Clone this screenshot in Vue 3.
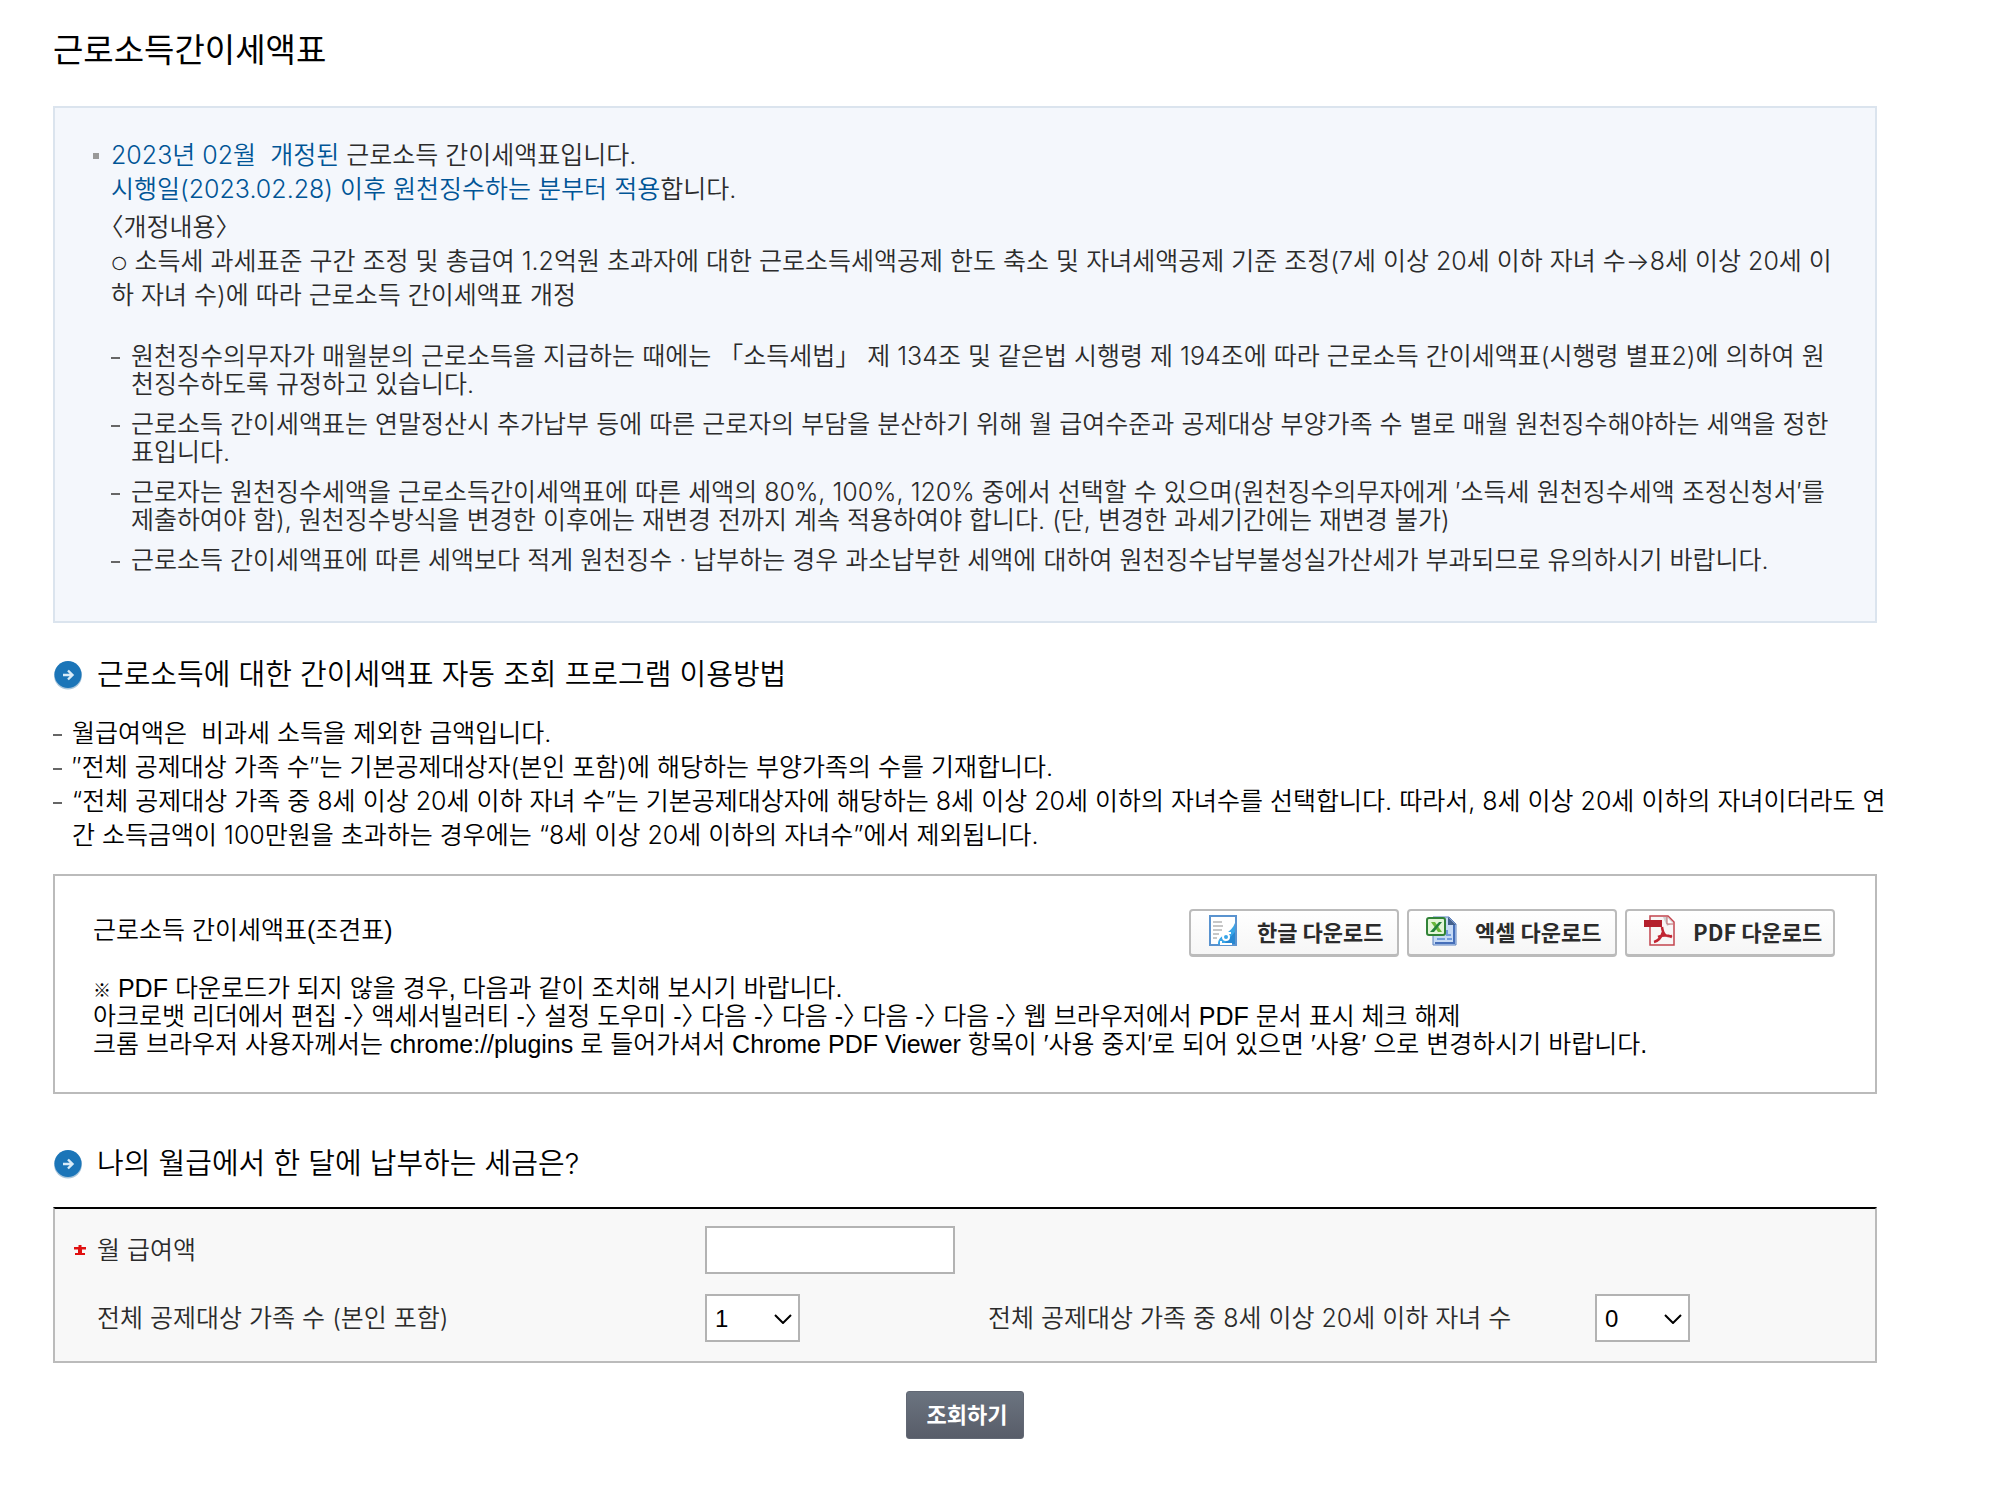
<script setup>
import { ref } from 'vue'

const salary = ref('')
const family = ref(1)
const children = ref(0)

const notices = [
  ['원천징수의무자가 매월분의 근로소득을 지급하는 때에는 「소득세법」 제 134조 및 같은법 시행령 제 194조에 따라 근로소득 간이세액표(시행령 별표2)에 의하여 원', '천징수하도록 규정하고 있습니다.'],
  ['근로소득 간이세액표는 연말정산시 추가납부 등에 따른 근로자의 부담을 분산하기 위해 월 급여수준과 공제대상 부양가족 수 별로 매월 원천징수해야하는 세액을 정한', '표입니다.'],
  ['근로자는 원천징수세액을 근로소득간이세액표에 따른 세액의 80%, 100%, 120% 중에서 선택할 수 있으며(원천징수의무자에게 ′소득세 원천징수세액 조정신청서′를', '제출하여야 함), 원천징수방식을 변경한 이후에는 재변경 전까지 계속 적용하여야 합니다. (단, 변경한 과세기간에는 재변경 불가)'],
  ['근로소득 간이세액표에 따른 세액보다 적게 원천징수 · 납부하는 경우 과소납부한 세액에 대하여 원천징수납부불성실가산세가 부과되므로 유의하시기 바랍니다.']
]

const guides = [
  ['월급여액은\u00a0 비과세 소득을 제외한 금액입니다.'],
  ['″전체 공제대상 가족 수″는 기본공제대상자(본인 포함)에 해당하는 부양가족의 수를 기재합니다.'],
  ['“전체 공제대상 가족 중 8세 이상 20세 이하 자녀 수”는 기본공제대상자에 해당하는 8세 이상 20세 이하의 자녀수를 선택합니다. 따라서, 8세 이상 20세 이하의 자녀이더라도 연', '간 소득금액이 100만원을 초과하는 경우에는 “8세 이상 20세 이하의 자녀수”에서 제외됩니다.']
]
</script>

<template>
  <main class="page">
    <h1 class="title">근로소득간이세액표</h1>

    <section class="notice">
      <div class="notice-intro">
        <p class="bullet"><em>2023년 02월&nbsp; 개정된</em> 근로소득 간이세액표입니다.</p>
        <p><em>시행일(2023.02.28) 이후 원천징수하는 분부터 적용</em>합니다.</p>
        <p class="revision">〈개정내용〉</p>
        <p><span class="mark">○</span> 소득세 과세표준 구간 조정 및 총급여 1.2억원 초과자에 대한 근로소득세액공제 한도 축소 및 자녀세액공제 기준 조정(7세 이상 20세 이하 자녀 수→8세 이상 20세 이</p>
        <p>하 자녀 수)에 따라 근로소득 간이세액표 개정</p>
      </div>
      <ul class="notice-list">
        <li v-for="(lines, i) in notices" :key="i">
          <span v-for="line in lines" :key="line" class="line">{{ line }}</span>
        </li>
      </ul>
    </section>

    <h2 class="heading">
      <svg class="heading-icon" viewBox="0 0 30 30" aria-hidden="true">
        <circle cx="15" cy="15.5" r="14" fill="#a9c6dc" />
        <circle cx="15" cy="14.5" r="13.5" fill="#1b75b8" />
        <path d="M10 15h9M15 10.500l4.500 4.500-4.500 4.500" fill="none" stroke="#d9ecf8" stroke-width="2.400" />
      </svg>
      근로소득에 대한 간이세액표 자동 조회 프로그램 이용방법
    </h2>
    <ul class="guide">
      <li v-for="(lines, i) in guides" :key="i">
        <span v-for="line in lines" :key="line" class="line">{{ line }}</span>
      </li>
    </ul>

    <section class="download">
      <div class="download-head">
        <h3>근로소득 간이세액표(조견표)</h3>
        <div class="download-buttons">
          <button type="button" class="btn-file">
            <svg viewBox="0 0 32 32" aria-hidden="true">
              <rect x="3" y="1" width="26" height="29" fill="#fff" stroke="#5a93cf" stroke-width="2" />
              <path d="M6 7h9M6 11h10M6 15h9M6 19h6M6 23h4" stroke="#b5b5b5" stroke-width="1.500" />
              <path d="M28 8v21H11c0-5 3-7 7-10 5-3 8-6 10-11z" fill="#39a5e8" />
              <path d="M28 17v12H17z" fill="#2788d2" />
              <g fill="none" stroke="#fff" stroke-width="2">
                <circle cx="19" cy="22" r="3" />
                <path d="M14 18h10M19 15v3M14 26v3h11" />
              </g>
            </svg>
            한글 다운로드
          </button>
          <button type="button" class="btn-file">
            <svg viewBox="0 0 32 32" aria-hidden="true">
              <path d="M8 2h16l7 7v21H8z" fill="#c6daf5" stroke="#5b80bf" />
              <path d="M29 10v18H10" fill="none" stroke="#466fb9" stroke-width="2" />
              <path d="M23 2l8 8h-8z" fill="#43618e" />
              <path d="M12 24h8M22 24h5M22 15v5h4M12 20h5" stroke="#729bdb" stroke-width="2" fill="none" />
              <rect x="2" y="3" width="18" height="17" rx="2" fill="#e3f5d8" stroke="#318337" stroke-width="2" />
              <path d="M6 7h4l7 10h-4z" fill="#6ab83b" />
              <path d="M14 7h3L9 17H5z" fill="#23823a" />
            </svg>
            엑셀 다운로드
          </button>
          <button type="button" class="btn-file">
            <svg viewBox="0 0 32 32" aria-hidden="true">
              <path d="M7 1h18l6 6v23H7z" fill="#f8f6f6" stroke="#c2444e" stroke-width="1.500" />
              <path d="M20 2h5l5 6-6 3z" fill="#cfcfcf" />
              <path d="M24 2v7h6" fill="#fff" stroke="#bc6268" />
              <path d="M1 5h18v7H1z" fill="#b41f2c" />
              <path d="M19 12c1 8 4 10 10 9M20 17c-2 6-5 9-9 10M15 22c5-2 9-2 14 0" fill="none" stroke="#c12532" stroke-width="2.500" />
            </svg>
            PDF 다운로드
          </button>
        </div>
      </div>
      <p><span class="mark">※</span> PDF 다운로드가 되지 않을 경우, 다음과 같이 조치해 보시기 바랍니다.</p>
      <p>아크로뱃 리더에서 편집 -〉 액세서빌러티 -〉 설정 도우미 -〉 다음 -〉 다음 -〉 다음 -〉 다음 -〉 웹 브라우저에서 PDF 문서 표시 체크 해제</p>
      <p>크롬 브라우저 사용자께서는 chrome://plugins 로 들어가셔서 Chrome PDF Viewer 항목이 ′사용 중지′로 되어 있으면 ′사용′ 으로 변경하시기 바랍니다.</p>
    </section>

    <h2 class="heading">
      <svg class="heading-icon" viewBox="0 0 30 30" aria-hidden="true">
        <circle cx="15" cy="15.5" r="14" fill="#a9c6dc" />
        <circle cx="15" cy="14.5" r="13.5" fill="#1b75b8" />
        <path d="M10 15h9M15 10.500l4.500 4.500-4.500 4.500" fill="none" stroke="#d9ecf8" stroke-width="2.400" />
      </svg>
      나의 월급에서 한 달에 납부하는 세금은?
    </h2>
    <form @submit.prevent>
      <div class="fields">
        <div class="row">
          <svg class="required" viewBox="0 0 12 12" aria-hidden="true">
            <path d="M4.500 1h3v2H12v2.500H8V9h3v2H1V9h3V5.500H0V3h4.500z" fill="#e01010" />
          </svg>
          <label for="salary">월 급여액</label>
          <div><input id="salary" v-model="salary" type="text"></div>
        </div>
        <div class="row">
          <label for="family">전체 공제대상 가족 수 (본인 포함)</label>
          <div class="select">
            <select id="family" v-model="family">
              <option v-for="n in 11" :key="n" :value="n">{{ n }}</option>
            </select>
            <svg viewBox="0 0 18 10" aria-hidden="true"><path d="M1 1l8 8 8-8" /></svg>
          </div>
          <label for="children">전체 공제대상 가족 중 8세 이상 20세 이하 자녀 수</label>
          <div class="select">
            <select id="children" v-model="children">
              <option v-for="n in 11" :key="n" :value="n - 1">{{ n - 1 }}</option>
            </select>
            <svg viewBox="0 0 18 10" aria-hidden="true"><path d="M1 1l8 8 8-8" /></svg>
          </div>
        </div>
      </div>
      <div class="actions">
        <button type="submit" class="btn-submit">조회하기</button>
      </div>
    </form>
  </main>
</template>

<style>
body {
  margin: 0;
  background: #fff;
}
</style>

<style scoped>
.page {
  padding: 28px 123px 72px 53px;
  font-family: Inter, "Noto Sans CJK KR", sans-serif;
  font-size: 25px;
  font-weight: 350;
  line-height: 34px;
  color: #000;
}

h1, h2, h3, p, ul {
  margin: 0;
  padding: 0;
  font-weight: inherit;
  font-size: inherit;
}

ul {
  list-style: none;
}

.title {
  font-size: 33px;
  font-weight: 400;
  line-height: 44px;
}

.line {
  display: block;
  white-space: nowrap;
}

.mark {
  font-size: 18px;
  line-height: 1;
}

.notice {
  margin-top: 34px;
  padding: 30px 38px 47px 56px;
  background: #f4f7fc;
  border: 2px solid #dbe4ee;
  color: #2b2b2b;
}

.notice-intro p {
  white-space: nowrap;
}

.notice-intro em {
  font-style: normal;
  color: #005596;
}

.bullet {
  position: relative;
}

.bullet::before {
  content: "";
  position: absolute;
  left: -18px;
  top: 15px;
  width: 6px;
  height: 6px;
  background: #999;
}

.notice-intro .revision {
  margin-top: 4px;
  font-feature-settings: "halt";
}

.notice-list {
  margin-top: 30px;
  line-height: 28px;
}

.notice-list li {
  position: relative;
  margin-top: 12px;
  padding-left: 20px;
}

.notice-list li::before,
.guide li::before {
  content: "";
  position: absolute;
  left: 0;
  top: 15px;
  width: 9px;
  height: 2px;
  background: #666;
}

.heading {
  display: flex;
  align-items: center;
  gap: 14px;
  margin-top: 32px;
  font-size: 29px;
  line-height: 40px;
}

.heading-icon {
  width: 30px;
  height: 30px;
}

.guide {
  margin-top: 21px;
}

.guide li {
  position: relative;
  padding-left: 19px;
}

.guide li::before {
  top: 18px;
}

.download {
  margin-top: 22px;
  padding: 33px 40px 34px 38px;
  border: 2px solid #bbb;
  font-family: "Liberation Sans", "Noto Sans CJK KR", sans-serif;
  font-feature-settings: "halt";
  line-height: 28px;
}

.download p {
  white-space: nowrap;
}

.download-head {
  display: flex;
  justify-content: space-between;
  align-items: flex-start;
  margin-bottom: 17px;
}

.download-head h3 {
  line-height: 42px;
}

.download-buttons {
  display: flex;
  gap: 8px;
}

.btn-file {
  display: flex;
  align-items: center;
  gap: 18px;
  width: 210px;
  height: 48px;
  padding: 0 0 3px 16px;
  background: linear-gradient(#fff, #f6f6f6);
  border: 2px solid #bbb;
  border-bottom-width: 3px;
  border-radius: 4px;
  font-family: "Noto Sans CJK KR", sans-serif;
  font-size: 22px;
  font-weight: 700;
  white-space: nowrap;
  color: #2b2b2b;
}

.btn-file svg {
  flex: none;
  width: 32px;
  height: 32px;
}

.download + .heading {
  margin-top: 50px;
}

.fields {
  margin-top: 23px;
  padding: 17px 0 19px;
  background: #f8f8f8;
  border: 2px solid #bbb;
  border-top-color: #000;
  color: #2b2b2b;
}

.row {
  display: grid;
  grid-template-columns: 608fr 283fr 607fr 280fr;
  align-items: center;
  position: relative;
  padding-left: 42px;
}

.row + .row {
  margin-top: 20px;
}

.required {
  position: absolute;
  left: 19px;
  top: 18px;
  width: 12px;
  height: 12px;
}

.row label {
  white-space: nowrap;
}

input,
select {
  display: block;
  box-sizing: border-box;
  width: 250px;
  height: 48px;
  padding: 0 8px;
  background: #fff;
  border: 2px solid #b3b3b3;
  border-radius: 0;
  font-family: "Liberation Sans", "Noto Sans CJK KR", sans-serif;
  font-size: 24px;
  color: #000;
}

select {
  width: 95px;
  appearance: none;
}

.select {
  position: relative;
  width: 95px;
}

.select svg {
  position: absolute;
  right: 8px;
  top: 20px;
  width: 18px;
  height: 10px;
  fill: none;
  stroke: #000;
  stroke-width: 2;
  pointer-events: none;
}

.actions {
  display: flex;
  justify-content: center;
  margin-top: 28px;
}

.btn-submit {
  width: 118px;
  height: 48px;
  padding: 0 0 4px 4px;
  background: linear-gradient(#6b7480, #585d69);
  border: 1px solid #626874;
  border-radius: 3px;
  font-family: "Noto Sans CJK KR", sans-serif;
  font-size: 22px;
  font-weight: 700;
  color: #fff;
}
</style>
